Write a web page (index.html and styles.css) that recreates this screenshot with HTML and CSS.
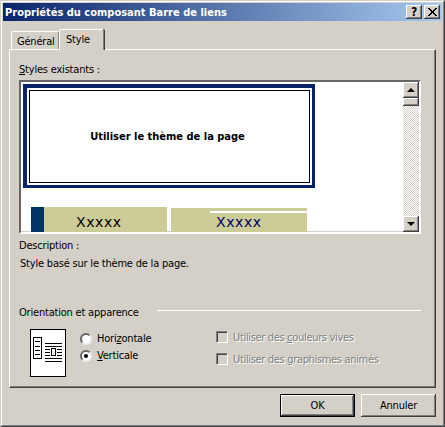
FILE: index.html
```html
<!DOCTYPE html>
<html lang="fr">
<head>
<meta charset="utf-8">
<title>Propriétés du composant Barre de liens</title>
<link rel="stylesheet" href="styles.css">
</head>
<body>
<div class="dialog">
  <div class="frame">
    <header class="titlebar">
      <span class="title">Propriétés du composant Barre de liens</span>
      <span class="capbtn help">?</span>
      <span class="capbtn close">
        <svg width="9" height="8" viewBox="0 0 9 8" shape-rendering="crispEdges"><path d="M0 0h2v1h1v1h1v1h1V2h1V1h1V0h2v1H8v1H7v1H6v2h1v1h1v1h1v1H7V7H6V6H5V5H4v1H3v1H2v1H0V7h1V6h1V5h1V3H2V2H1V1H0z" fill="#000"/></svg>
      </span>
    </header>
    <main class="content">
      <nav class="tabs">
        <div class="tab">Général</div>
        <div class="tab active">Style</div>
      </nav>
      <section class="panel">
        <div class="label"><u>S</u>tyles existants :</div>
        <div class="listbox">
          <div class="listarea">
            <div class="theme">
              <div class="theme-inner">Utiliser le thème de la page</div>
            </div>
            <div class="swatches">
              <div class="swatch first"><span class="bar"></span><span class="x">Xxxxx</span></div>
              <div class="swatch second"><span class="stripe"></span><span class="x navy">Xxxxx</span></div>
            </div>
          </div>
          <div class="scrollbar">
            <div class="sbtn"><span class="arrow up"></span></div>
            <div class="thumb"></div>
            <div class="track"></div>
            <div class="sbtn"><span class="arrow down"></span></div>
          </div>
        </div>
        <div class="label desc-head">Description :</div>
        <div class="label desc">Style basé sur le thème de la page.</div>
        <div class="group-head">
          <span class="label">Orientation et apparence</span>
          <span class="rule"></span>
        </div>
        <div class="options">
          <svg class="preview" width="36" height="48" viewBox="0 0 36 48" shape-rendering="crispEdges">
            <rect x="0.5" y="0.5" width="35" height="47" fill="#fff" stroke="#000"/>
            <rect x="3.5" y="8.5" width="8" height="21" fill="#fff" stroke="#000"/>
            <path d="M5 12.5h5M5 17.5h5M5 21.5h5M5 25.5h5" stroke="#000" fill="none"/>
            <path d="M15 14.5h17M15 17.5h17M15 20.5h5M15 23.5h5M15 26.5h5M27 20.5h5M27 23.5h5M27 26.5h5M15 29.5h17M15 32.5h17" stroke="#000" fill="none"/>
            <rect x="21.5" y="19.5" width="4" height="7" fill="#fff" stroke="#000"/>
          </svg>
          <div class="radios">
            <div class="opt"><span class="radio"></span><span>Hori<u>z</u>ontale</span></div>
            <div class="opt"><span class="radio on"></span><span><u>V</u>erticale</span></div>
          </div>
          <div class="checks">
            <div class="chk"><span class="box"></span><span class="disabled">Utiliser des <u>c</u>ouleurs vives</span></div>
            <div class="chk"><span class="box"></span><span class="disabled">Utiliser des <u>g</u>raphismes animés</span></div>
          </div>
        </div>
      </section>
      <footer class="footer">
        <button class="btn default" type="button">OK</button>
        <button class="btn" type="button">Annuler</button>
      </footer>
    </main>
  </div>
</div>
</body>
</html>
```
FILE: styles.css
```css
* { box-sizing: border-box; }
html, body { margin: 0; padding: 0; }
body {
  width: 445px;
  height: 427px;
  overflow: hidden;
  background: #d4d0c8;
  font-family: "DejaVu Sans Condensed", "DejaVu Sans", sans-serif;
  font-stretch: condensed;
  font-size: 11px;
  line-height: 13px;
  letter-spacing: -0.2px;
  color: #000;
}
.dialog {
  width: 445px;
  height: 427px;
  border: 1px solid;
  border-color: #d4d0c8 #404040 #404040 #d4d0c8;
}
.frame {
  height: 100%;
  border: 1px solid;
  border-color: #fff #808080 #808080 #fff;
  padding: 1px;
}
.titlebar {
  height: 18px;
  display: flex;
  align-items: center;
  padding: 0 2px;
  background: linear-gradient(to right, #0a246a, #a6caf0);
  color: #fff;
}
.title { flex: 1; font-weight: 700; font-size: 11px; letter-spacing: 0; white-space: nowrap; }
.capbtn {
  width: 16px;
  height: 14px;
  background: #d4d0c8;
  display: flex;
  align-items: center;
  justify-content: center;
  box-shadow: inset -1px -1px 0 #404040, inset 1px 1px 0 #fff, inset -2px -2px 0 #808080;
  color: #000;
  font-weight: 700;
  font-size: 12px;
}
.help { margin-right: 2px; }
.content { padding: 0 6px; }
.tabs {
  display: flex;
  align-items: flex-end;
  height: 20px;
  margin-top: 8px;
  padding-left: 2px;
  position: relative;
  z-index: 1;
}
.tab {
  height: 18px;
  width: 48px;
  padding: 3px 0 0 5px;
  background: #d4d0c8;
  border-top: 1px solid #fff;
  border-left: 1px solid #fff;
  border-right: 1px solid #808080;
  border-radius: 2px 2px 0 0;
}
.tab.active {
  height: 21px;
  width: 45px;
  margin-bottom: -1px;
  padding: 3px 0 0 6px;
  box-shadow: 1px 0 0 #404040;
}
.panel {
  height: 339px;
  padding: 13px 14px 0 9px;
  border: 1px solid;
  border-color: #fff #404040 #404040 #fff;
  box-shadow: inset -1px -1px 0 #808080;
}
.label { display: block; height: 13px; white-space: nowrap; }
.listbox {
  display: flex;
  width: 402px;
  height: 154px;
  margin-top: 4px;
  background: #fff;
  border: 2px solid;
  border-color: #666 #fff #fff #666;
  box-shadow: inset -1px -1px 0 #d4d0c8;
}
.listarea { flex: 1; overflow: hidden; }
.theme {
  width: 292px;
  height: 104px;
  margin: 2px 0 0 2px;
  padding: 2px;
  border: 4px solid #0a246a;
  border-width: 4px 3px 3px 4px;
}
.theme-inner {
  height: 100%;
  border: 1px solid #000;
  display: flex;
  align-items: center;
  justify-content: center;
  font-weight: 700;
  letter-spacing: 0;
  padding-right: 4px;
}
.swatches {
  display: flex;
  gap: 4px;
  margin: 19px 0 0 10px;
}
.swatch {
  width: 136px;
  height: 25px;
  background: #cccc99;
  display: flex;
  font-family: "DejaVu Sans", sans-serif;
  font-stretch: normal;
  font-size: 14px;
  line-height: 18px;
}
.bar { width: 13px; background: #003366; }
.x { display: block; padding: 6px 0 0 32px; letter-spacing: 0.6px; }
.second { position: relative; margin-top: 1px; height: 24px; justify-content: flex-start; }
.second .x { padding: 5px 0 0 45px; }
.stripe {
  position: absolute;
  left: 39px;
  right: 0;
  top: 3px;
  height: 2px;
  background: #fff;
}
.navy { color: #000066; }
.scrollbar {
  width: 16px;
  height: 150px;
  display: flex;
  flex-direction: column;
}
.sbtn, .thumb {
  background: #d4d0c8;
  box-shadow: inset -1px -1px 0 #404040, inset 1px 1px 0 #fff, inset -2px -2px 0 #808080;
}
.sbtn {
  height: 16px;
  flex: none;
  display: flex;
  align-items: center;
  justify-content: center;
}
.thumb { height: 8px; flex: none; }
.track {
  flex: 1;
  background: conic-gradient(#d4d0c8 25%, #fff 0 50%, #d4d0c8 0 75%, #fff 0) 0 0 / 2px 2px;
}
.arrow { width: 0; height: 0; border-left: 4px solid transparent; border-right: 4px solid transparent; }
.arrow.up { border-bottom: 4px solid #000; }
.arrow.down { border-top: 4px solid #000; }
.desc-head { margin-top: 5px; }
.desc { margin-top: 5px; padding-left: 1px; }
.group-head {
  display: flex;
  align-items: center;
  gap: 18px;
  margin-top: 36px;
}
.rule { flex: 1; height: 1px; margin-top: -5px; background: #fff; }
.options {
  display: flex;
  align-items: flex-start;
  margin: 10px 0 0 11px;
}
.preview { display: block; flex: none; }
.radios { width: 136px; margin: 1px 0 0 14px; }
.opt { display: flex; align-items: center; gap: 5px; height: 17px; }
.radio {
  width: 12px;
  height: 12px;
  flex: none;
  border-radius: 50%;
  background: #fff;
  border: 2px solid;
  border-color: #666 #eee #eee #666;
  display: flex;
  align-items: center;
  justify-content: center;
}
.radio.on::after {
  content: "";
  width: 4px;
  height: 4px;
  border-radius: 50%;
  background: #000;
}
.checks { padding-top: 2px; }
.chk { display: flex; align-items: center; gap: 5px; height: 12px; margin-bottom: 10px; }
.box {
  width: 12px;
  height: 12px;
  flex: none;
  background: #d4d0c8;
  border: 1px solid;
  border-color: #808080 #fff #fff #808080;
  box-shadow: inset 1px 1px 0 #404040;
}
.disabled { color: #808080; text-shadow: 1px 1px 0 #fff; white-space: nowrap; letter-spacing: -0.33px; }
.footer {
  display: flex;
  justify-content: flex-end;
  gap: 6px;
  margin-top: 6px;
}
.btn {
  width: 75px;
  height: 23px;
  padding: 0;
  font: inherit;
  letter-spacing: inherit;
  color: #000;
  background: #d4d0c8;
  border: 0;
  box-shadow: inset -1px -1px 0 #404040, inset 1px 1px 0 #fff, inset -2px -2px 0 #808080;
}
.btn.default {
  box-shadow: inset 0 0 0 1px #000, inset -2px -2px 0 #404040, inset 2px 2px 0 #fff, inset -3px -3px 0 #808080;
}
```
